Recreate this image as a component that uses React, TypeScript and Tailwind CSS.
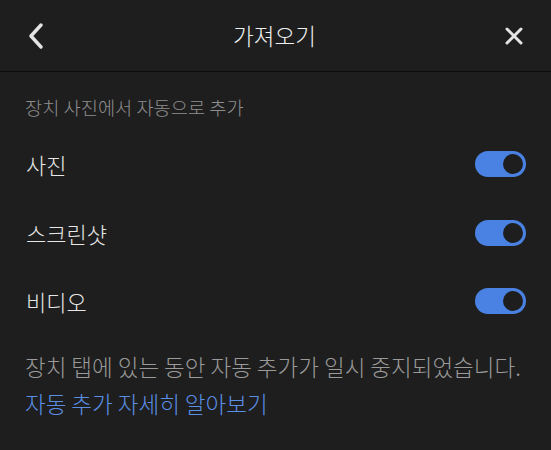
import React from "react";

const font = { fontFamily: '"Noto Sans CJK KR", "Noto Sans", sans-serif' };

function Toggle() {
  return (
    <div className="w-[51px] h-[26px] rounded-full bg-[#4a82e4] flex items-center justify-end pr-[3px]">
      <div className="w-[20px] h-[20px] rounded-full bg-[#1e1e1e]" />
    </div>
  );
}

function Row({ label }: { label: string }) {
  return (
    <div className="h-[68.5px] flex items-center justify-between pl-[26px] pr-[25px]">
      <span className="text-[22px] text-[#e6e6e6] leading-none font-light">{label}</span>
      <Toggle />
    </div>
  );
}

export default function App() {
  return (
    <div className="w-[551px] h-[450px] bg-[#1e1e1e] overflow-hidden" style={font}>
      <div className="h-[72px] flex items-center justify-between px-[26px] border-b border-[#0c0c0c]">
        <svg width="18" height="26" viewBox="0 0 18 26" className="ml-[1px]">
          <path d="M14 2 L4 13 L14 24" stroke="#e4e4e4" strokeWidth="3.4" fill="none" strokeLinecap="round" strokeLinejoin="round" />
        </svg>
        <span className="text-[22.5px] text-[#f0f0f0] leading-none font-light">가져오기</span>
        <svg width="20" height="20" viewBox="0 0 20 20" className="mr-[1px]">
          <path d="M3 3 L17 17 M17 3 L3 17" stroke="#e4e4e4" strokeWidth="3" strokeLinecap="round" />
        </svg>
      </div>
      <div className="pt-[22px] pl-[25px] text-[18.7px] text-[#8e8e8e] leading-[26px] font-light">
        장치 사진에서 자동으로 추가
      </div>
      <div className="mt-[10px]">
        <Row label="사진" />
        <Row label="스크린샷" />
        <Row label="비디오" />
      </div>
      <div className="pl-[25px] pt-[14px]">
        <div className="text-[22.5px] text-[#9a9a9a] leading-[32px] font-light">
          장치 탭에 있는 동안 자동 추가가 일시 중지되었습니다.
        </div>
        <div className="text-[22.5px] text-[#5b8fe6] leading-[32px] mt-[5px] font-light">
          자동 추가 자세히 알아보기
        </div>
      </div>
    </div>
  );
}
